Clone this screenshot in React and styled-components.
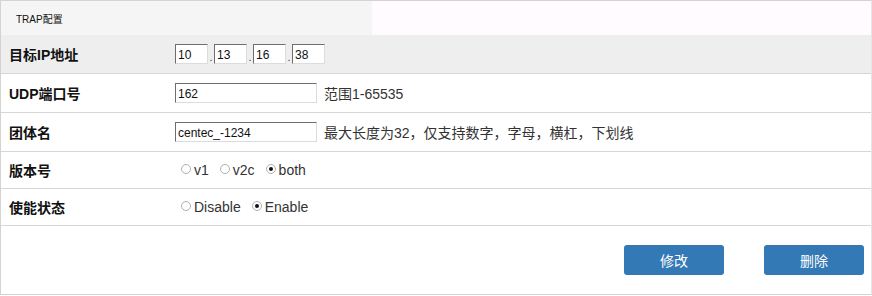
import React from 'react';
import styled, { createGlobalStyle } from 'styled-components';

const GlobalStyle = createGlobalStyle`
  html, body {
    margin: 0;
    padding: 0;
    background: #fff;
  }
  body {
    font-family: "Liberation Sans", "Noto Sans CJK SC", sans-serif;
    color: #222;
  }
`;

const Panel = styled.div`
  width: 872px;
  height: 295px;
  box-sizing: border-box;
  border: 1px solid #d3d3d3;
  border-right-color: #e6e6e6;
  display: flex;
  flex-direction: column;
`;

const Header = styled.div`
  display: flex;
  height: 34px;
  background: #fffbfe;
`;

const Tab = styled.div`
  width: 356px;
  padding-left: 15px;
  background: #f5f5f5;
  display: flex;
  align-items: center;
  font-size: 10px;
  color: #111;
`;

const Row = styled.div`
  display: flex;
  align-items: center;
  height: ${p => p.h || 38}px;
  background: ${p => (p.shaded ? '#eeeeee' : '#fff')};
  border-bottom: 1px solid #d6d6d6;
`;

const Label = styled.div`
  width: 166px;
  padding-left: 8px;
  font-size: 14px;
  font-weight: bold;
  color: #111;
`;

const Value = styled.div`
  display: flex;
  align-items: center;
  gap: ${p => p.gap || 0}px;
  padding-left: ${p => p.pad || 0}px;
  font-size: 14px;
  color: #333;
`;

const Input = styled.input`
  box-sizing: border-box;
  width: ${p => p.w || 142}px;
  height: 20px;
  margin: 0;
  padding: 1px 2px 0;
  font-family: "Liberation Sans", sans-serif;
  font-size: 12px;
  color: #111;
  background: #fff;
  border: 1px solid;
  border-color: #6e6e6e #dcdcdc #dcdcdc #6e6e6e;
  outline: none;
`;

const Dot = styled.span`
  width: 6px;
  text-align: center;
  font-size: 11px;
  color: #444;
  align-self: flex-end;
  line-height: 14px;
`;

const Hint = styled.span`
  margin-left: 7px;
`;

const Choice = styled.label`
  display: flex;
  align-items: center;
  font-size: 14px;
  color: #333;
`;

const Radio = styled.input.attrs({ type: 'radio' })`
  appearance: none;
  box-sizing: border-box;
  width: 10px;
  height: 10px;
  margin: -3px 3px 0 0;
  border: 1px solid #b0b0b0;
  border-radius: 50%;
  background: #fff;
  display: grid;
  place-content: center;

  &:checked::after {
    content: '';
    width: 4px;
    height: 4px;
    border-radius: 50%;
    background: #111;
  }
`;

const Footer = styled.div`
  flex: 1;
  display: flex;
  justify-content: flex-end;
  align-items: center;
  gap: 40px;
  padding-right: 7px;
  padding-bottom: 1px;
`;

const Button = styled.button`
  width: 100px;
  height: 30px;
  border: none;
  border-radius: 3px;
  background: #3379b5;
  color: #fff;
  font-family: "Noto Sans CJK SC", sans-serif;
  font-size: 14px;
  cursor: pointer;
`;

const ip = ['10', '13', '16', '38'];

export default function App() {
  return (
    <>
      <GlobalStyle />
      <Panel>
        <Header>
          <Tab>TRAP配置</Tab>
        </Header>
        <Row shaded>
          <Label>目标IP地址</Label>
          <Value>
            {ip.map((part, i) => (
              <React.Fragment key={i}>
                {i > 0 && <Dot>.</Dot>}
                <Input w={33} defaultValue={part} />
              </React.Fragment>
            ))}
          </Value>
        </Row>
        <Row>
          <Label>UDP端口号</Label>
          <Value>
            <Input defaultValue="162" />
            <Hint>范围1-65535</Hint>
          </Value>
        </Row>
        <Row>
          <Label>团体名</Label>
          <Value>
            <Input defaultValue="centec_-1234" />
            <Hint>最大长度为32，仅支持数字，字母，横杠，下划线</Hint>
          </Value>
        </Row>
        <Row h={36}>
          <Label>版本号</Label>
          <Value pad={6} gap={11}>
            <Choice><Radio name="ver" />v1</Choice>
            <Choice><Radio name="ver" />v2c</Choice>
            <Choice><Radio name="ver" defaultChecked />both</Choice>
          </Value>
        </Row>
        <Row h={36}>
          <Label>使能状态</Label>
          <Value pad={6} gap={11}>
            <Choice><Radio name="state" />Disable</Choice>
            <Choice><Radio name="state" defaultChecked />Enable</Choice>
          </Value>
        </Row>
        <Footer>
          <Button>修改</Button>
          <Button>删除</Button>
        </Footer>
      </Panel>
    </>
  );
}
